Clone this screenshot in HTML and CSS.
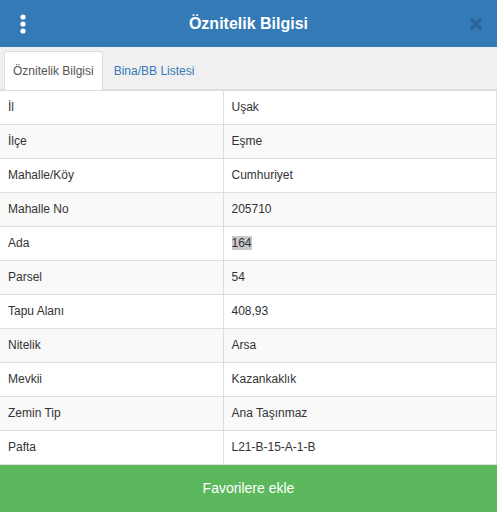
FILE: index.html
```
<!DOCTYPE html>
<html lang="tr">
<head>
<meta charset="utf-8">
<title>Öznitelik Bilgisi</title>
<link rel="stylesheet" href="styles.css">
</head>
<body>
<div class="panel">
  <header class="header">
    <span class="menu">
      <svg width="8" height="22" viewBox="0 0 8 22"><circle cx="4" cy="4" r="2.6" fill="#fff"/><circle cx="4" cy="11" r="2.6" fill="#fff"/><circle cx="4" cy="18" r="2.6" fill="#fff"/></svg>
    </span>
    <h1 class="title">Öznitelik Bilgisi</h1>
    <span class="close">
      <svg width="12" height="12" viewBox="0 0 12 12"><path d="M1.5 1.5 L10.5 10.5 M10.5 1.5 L1.5 10.5" stroke="#2c6598" stroke-width="3.2" stroke-linecap="round"/></svg>
    </span>
  </header>
  <nav class="tabs">
    <a class="tab active">Öznitelik Bilgisi</a>
    <a class="tab">Bina/BB Listesi</a>
  </nav>
  <table class="attrs">
    <tbody>
      <tr><td>İl</td><td>Uşak</td></tr>
      <tr><td>İlçe</td><td>Eşme</td></tr>
      <tr><td>Mahalle/Köy</td><td>Cumhuriyet</td></tr>
      <tr><td>Mahalle No</td><td>205710</td></tr>
      <tr><td>Ada</td><td><span class="sel">164</span></td></tr>
      <tr><td>Parsel</td><td>54</td></tr>
      <tr><td>Tapu Alanı</td><td>408,93</td></tr>
      <tr><td>Nitelik</td><td>Arsa</td></tr>
      <tr><td>Mevkii</td><td>Kazankaklık</td></tr>
      <tr><td>Zemin Tip</td><td>Ana Taşınmaz</td></tr>
      <tr><td>Pafta</td><td>L21-B-15-A-1-B</td></tr>
    </tbody>
  </table>
  <button class="fav">Favorilere ekle</button>
</div>
</body>
</html>
```
FILE: styles.css
```
* { box-sizing: border-box; }
html, body { margin: 0; padding: 0; }
body {
  font-family: "Liberation Sans", Arial, sans-serif;
  color: #333;
  background: #fff;
  width: 497px;
  height: 512px;
  overflow: hidden;
}
.panel { display: flex; flex-direction: column; height: 512px; }
.header {
  height: 47px;
  background: #337ab7;
  display: flex;
  align-items: center;
}
.menu { width: 46px; display: flex; justify-content: center; padding-top: 1px; }
.menu svg { display: block; }
.title {
  flex: 1;
  margin: 0;
  text-align: center;
  color: #fff;
  font-size: 16px;
  font-weight: bold;
}
.close { width: 46px; display: flex; justify-content: center; padding-left: 4px; }
.close svg { display: block; }
.tabs {
  height: 42px;
  background: #f0f0f0;
  display: flex;
  align-items: flex-end;
  padding: 0 4px;
  gap: 2px;
}
.tab {
  height: 39px;
  margin-bottom: -1px;
  display: flex;
  align-items: center;
  padding: 0 8px;
  font-size: 12px;
  color: #337ab7;
  border: 1px solid transparent;
  border-bottom: none;
  border-radius: 3px 3px 0 0;
}
.tab.active {
  background: #fff;
  color: #555;
  border-color: #ddd;
  position: relative;
  z-index: 1;
}
.attrs {
  width: 497px;
  border-collapse: collapse;
  border-top: 2px solid #ddd;
  border-right: 1px solid #ddd;
  font-size: 12px;
}
.attrs td {
  height: 34px;
  padding: 0 8px;
  border-bottom: 1px solid #ddd;
  vertical-align: middle;
  line-height: 17px;
}
.attrs td:first-child { width: 223px; }
.attrs td + td { border-left: 1px solid #ddd; }
.attrs tr:nth-child(even) td { background: #f9f9f9; }
.sel { background: #c8c8c8; }
.fav {
  flex: 1;
  border: none;
  margin: 0;
  background: #5cb85c;
  color: #fff;
  font-family: "Liberation Sans", Arial, sans-serif;
  font-size: 14px;
  padding: 0;
}
```
